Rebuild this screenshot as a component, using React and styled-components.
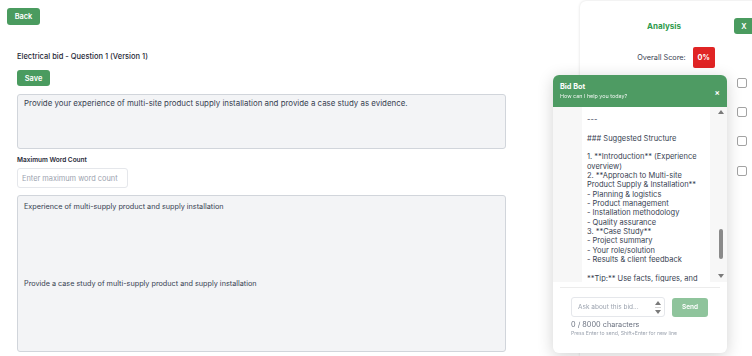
import styled, { createGlobalStyle } from "styled-components";

const GlobalStyle = createGlobalStyle`
  html, body {
    margin: 0;
    padding: 0;
    background: #fff;
  }
  body {
    font-family: Inter, "Noto Sans", sans-serif;
    color: #1f2937;
    overflow: hidden;
  }
  * {
    box-sizing: border-box;
  }
`;

const Page = styled.div`
  display: flex;
  width: 100vw;
  height: 100vh;
  overflow: hidden;
  background: #fff;
`;

const Main = styled.main`
  flex: 0 0 580px;
  padding: 8px 7px 0;
  display: flex;
  flex-direction: column;
  align-items: flex-start;
  overflow: hidden;
  & > * {
    flex-shrink: 0;
  }
`;

const GreenButton = styled.button`
  flex-shrink: 0;
  background: #4a9b5f;
  color: #fff;
  border: none;
  border-radius: 3px;
  font-family: Inter, sans-serif;
  font-weight: 600;
  font-size: 7.4px;
  height: ${(p) => p.$h || 17}px;
  width: ${(p) => p.$w || 33}px;
  margin-top: ${(p) => p.$mt || 0}px;
  padding: 0;
  cursor: pointer;
`;

const Editor = styled.section`
  margin-left: 10px;
  width: 489px;
  display: flex;
  flex-direction: column;
  align-items: flex-start;
  & > * {
    flex-shrink: 0;
  }
`;

const Title = styled.h1`
  margin: 27px 0 0;
  font-size: 7.5px;
  font-weight: 500;
  line-height: 10px;
  color: #1f2937;
`;

const Box = styled.textarea`
  display: block;
  width: 100%;
  height: ${(p) => p.$h}px;
  margin-top: ${(p) => p.$mt}px;
  background: #f3f4f6;
  border: 1px solid #d1d5db;
  border-radius: 3px;
  padding: ${(p) => p.$pt}px 6px;
  font-family: Inter, sans-serif;
  font-size: ${(p) => p.$fs}px;
  line-height: 9.6px;
  color: #374151;
  resize: none;
  outline: none;
  overflow: hidden;
`;

const Label = styled.label`
  margin-top: 7px;
  font-size: 6.5px;
  font-weight: 600;
  line-height: 9px;
  color: #1f2937;
`;

const NumberInput = styled.input`
  margin-top: 3px;
  width: 111px;
  height: 20px;
  border: 1px solid #e5e7eb;
  border-radius: 3px;
  padding: 0 4px;
  font-family: Inter, sans-serif;
  font-size: 7.4px;
  color: #374151;
  outline: none;
  &::placeholder {
    color: #9ca3af;
  }
`;

const Aside = styled.aside`
  flex: 0 0 192px;
  margin-top: 1px;
  border-radius: 6px 0 0 0;
  box-shadow: 0 0 3px rgba(0, 0, 0, 0.14);
  padding: 0 18px 0 12px;
  display: flex;
  flex-direction: column;
  background: #fff;
`;

const AsideHeader = styled.div`
  margin-top: 17px;
  display: flex;
  align-items: center;
  height: 16px;
  gap: 4px;
`;

const AsideTitle = styled.h2`
  flex: 1;
  margin: 0 0 0 6px;
  text-align: center;
  color: #2e9a4c;
  font-size: 8px;
  font-weight: 700;
`;

const ScoreRow = styled.div`
  margin-top: 13px;
  margin-left: 6px;
  display: flex;
  justify-content: center;
  align-items: center;
  gap: 7px;
  font-size: 7.3px;
  color: #374151;
`;

const ScoreBadge = styled.span`
  width: 22px;
  height: 21px;
  background: #e02424;
  color: #fff;
  font-weight: 700;
  border-radius: 2px;
  display: flex;
  align-items: center;
  justify-content: center;
`;

const CheckRow = styled.div`
  height: 29.4px;
  display: flex;
  align-items: center;
  justify-content: flex-end;
  padding-right: 7px;
`;

const Check = styled.span`
  width: 10px;
  height: 10px;
  border: 1px solid #a3a3a3;
  border-radius: 2px;
  background: #fff;
`;

const Chat = styled.div`
  position: fixed;
  right: 25px;
  bottom: 3px;
  width: 174px;
  height: 278px;
  border-radius: 6px;
  box-shadow: 0 3px 16px rgba(0, 0, 0, 0.18);
  background: #fff;
  overflow: hidden;
  display: flex;
  flex-direction: column;
`;

const ChatHeader = styled.div`
  flex: 0 0 32px;
  background: #4e9b63;
  color: #fff;
  padding: 0 7px;
  display: flex;
  align-items: center;
  justify-content: space-between;
`;

const BotName = styled.div`
  font-size: 7.3px;
  font-weight: 700;
  line-height: 10px;
`;

const BotSub = styled.div`
  font-size: 5.4px;
  line-height: 8px;
  opacity: 0.92;
`;

const Close = styled.span`
  font-size: 8px;
  font-weight: 600;
  margin-top: 2px;
`;

const ChatBody = styled.div`
  flex: 1;
  display: flex;
  background: #f7f7f7;
  min-height: 0;
`;

const Messages = styled.div`
  flex: 1;
  overflow: hidden;
  padding-left: 29px;
  padding-right: 4px;
`;

const Bubble = styled.div`
  background: #fff;
  padding: 8px 5px 6px;
  font-size: 7.5px;
  line-height: 9.35px;
  color: #374151;
  white-space: pre-wrap;
`;

const Track = styled.div`
  flex: 0 0 13px;
  display: flex;
  flex-direction: column;
  align-items: center;
  padding: 3px 0 4px;
`;

const Arrow = styled.span`
  width: 0;
  height: 0;
  border-left: 3px solid transparent;
  border-right: 3px solid transparent;
  ${(p) =>
    p.$down
      ? "border-top: 4px solid #7a7a7a;"
      : "border-bottom: 4px solid #7a7a7a;"}
`;

const Thumb = styled.span`
  margin-top: auto;
  margin-bottom: 15px;
  width: 4px;
  height: 30px;
  border-radius: 2px;
  background: #8a8a8a;
`;

const ChatFooter = styled.div`
  flex: 0 0 71px;
  padding: 0 7px;
`;

const Divider = styled.div`
  margin-top: 5px;
  border-top: 1px solid #ececec;
`;

const Form = styled.div`
  padding: 0 11px;
`;

const InputRow = styled.div`
  margin-top: 9px;
  display: flex;
  align-items: center;
  gap: 7px;
`;

const AskField = styled.div`
  width: 94px;
  height: 20px;
  border: 1px solid #e5e7eb;
  border-radius: 3px;
  display: flex;
  align-items: center;
  padding: 0 3px 0 6px;
`;

const AskInput = styled.input`
  flex: 1;
  min-width: 0;
  border: none;
  outline: none;
  padding: 0;
  font-family: Inter, sans-serif;
  font-size: 6.5px;
  color: #374151;
  background: transparent;
  &::placeholder {
    color: #9ca3af;
  }
`;

const Spinner = styled.div`
  display: flex;
  flex-direction: column;
  align-items: center;
  gap: 2px;
  & > i {
    width: 6px;
    border-top: 1px solid #d4d4d4;
  }
`;

const SendButton = styled.button`
  width: 36px;
  height: 19px;
  border: none;
  border-radius: 3px;
  background: #8fc49c;
  color: #fff;
  font-family: Inter, sans-serif;
  font-size: 6.5px;
  font-weight: 600;
  padding: 0;
`;

const Counter = styled.div`
  margin-top: 3px;
  font-size: 7.3px;
  line-height: 9px;
  color: #6b7280;
`;

const Hint = styled.div`
  margin-top: 1px;
  font-size: 5.1px;
  line-height: 6px;
  color: #9ca3af;
`;

const question =
  "Provide your experience of multi-site product supply installation and provide a case study as evidence.";

const answer =
  "Experience of multi-supply product and supply installation\n\n\n\n\n\n\n\nProvide a case study of multi-supply product and supply installation";

const reply = `---

### Suggested Structure

1. **Introduction** (Experience overview)
2. **Approach to Multi-site Product Supply & Installation**
- Planning & logistics
- Product management
- Installation methodology
- Quality assurance
3. **Case Study**
- Project summary
- Your role/solution
- Results & client feedback

**Tip:** Use facts, figures, and examples wherever possible.`;

export default function App() {
  return (
    <>
      <GlobalStyle />
      <Page>
        <Main>
          <GreenButton>Back</GreenButton>
          <Editor>
            <Title>Electrical bid - Question 1 (Version 1)</Title>
            <GreenButton $h={16} $mt={8}>
              Save
            </GreenButton>
            <Box $h={55} $mt={8} $pt={4} $fs={7.9} value={question} readOnly />
            <Label>Maximum Word Count</Label>
            <NumberInput placeholder="Enter maximum word count" />
            <Box $h={157} $mt={7} $pt={6} $fs={7.25} value={answer} readOnly />
          </Editor>
        </Main>
        <Aside>
          <AsideHeader>
            <AsideTitle>Analysis</AsideTitle>
            <GreenButton $w={20} $h={16}>
              X
            </GreenButton>
          </AsideHeader>
          <ScoreRow>
            Overall Score:
            <ScoreBadge>0%</ScoreBadge>
          </ScoreRow>
          {[0, 1, 2, 3].map((i) => (
            <CheckRow key={i}>
              <Check />
            </CheckRow>
          ))}
        </Aside>
      </Page>
      <Chat>
        <ChatHeader>
          <div>
            <BotName>Bid Bot</BotName>
            <BotSub>How can I help you today?</BotSub>
          </div>
          <Close>×</Close>
        </ChatHeader>
        <ChatBody>
          <Messages>
            <Bubble>{reply}</Bubble>
          </Messages>
          <Track>
            <Arrow />
            <Thumb />
            <Arrow $down />
          </Track>
        </ChatBody>
        <ChatFooter>
          <Divider />
          <Form>
            <InputRow>
              <AskField>
                <AskInput placeholder="Ask about this bid..." />
                <Spinner>
                  <Arrow />
                  <i />
                  <Arrow $down />
                </Spinner>
              </AskField>
              <SendButton>Send</SendButton>
            </InputRow>
            <Counter>0 / 8000 characters</Counter>
            <Hint>Press Enter to send, Shift+Enter for new line</Hint>
          </Form>
        </ChatFooter>
      </Chat>
    </>
  );
}
